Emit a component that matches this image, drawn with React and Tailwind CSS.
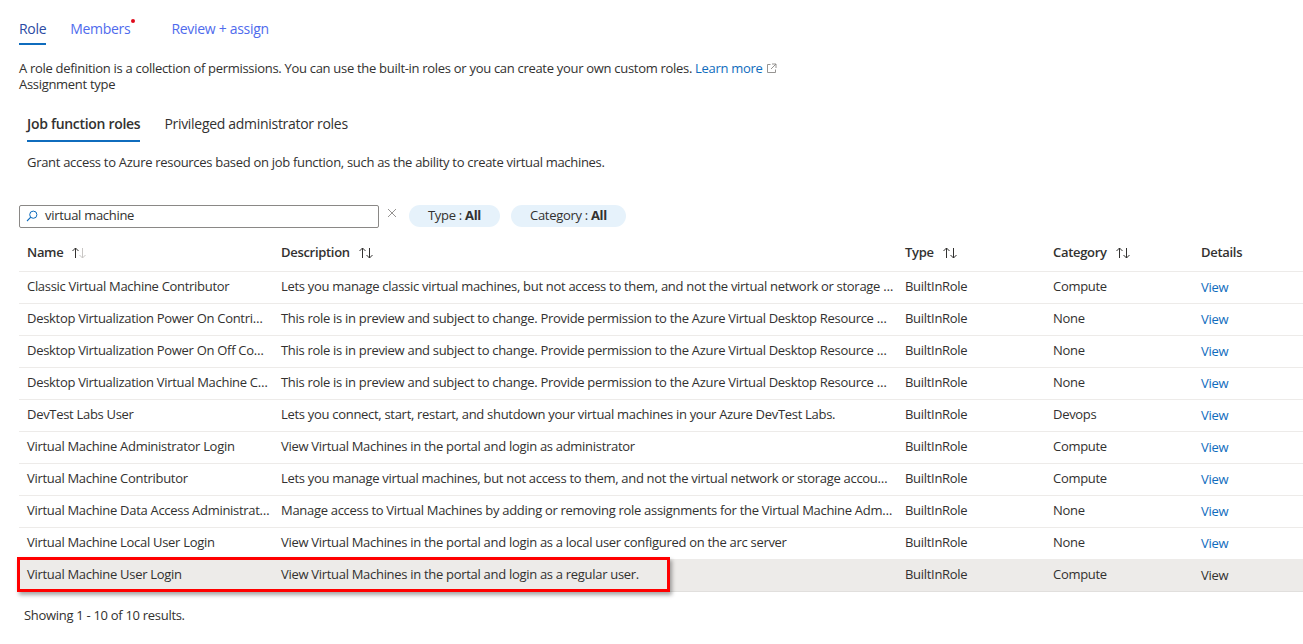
import React from "react";

const rows = [
  ["Classic Virtual Machine Contributor", "Lets you manage classic virtual machines, but not access to them, and not the virtual network or storage account they're connected to.", "Compute"],
  ["Desktop Virtualization Power On Contributor", "This role is in preview and subject to change. Provide permission to the Azure Virtual Desktop Resource Provider to start virtual machines.", "None"],
  ["Desktop Virtualization Power On Off Contributor", "This role is in preview and subject to change. Provide permission to the Azure Virtual Desktop Resource Provider to start and stop virtual machines.", "None"],
  ["Desktop Virtualization Virtual Machine Contributor", "This role is in preview and subject to change. Provide permission to the Azure Virtual Desktop Resource Provider to create, delete, update virtual machines.", "None"],
  ["DevTest Labs User", "Lets you connect, start, restart, and shutdown your virtual machines in your Azure DevTest Labs.", "Devops"],
  ["Virtual Machine Administrator Login", "View Virtual Machines in the portal and login as administrator", "Compute"],
  ["Virtual Machine Contributor", "Lets you manage virtual machines, but not access to them, and not the virtual network or storage account they're connected to.", "Compute"],
  ["Virtual Machine Data Access Administrator", "Manage access to Virtual Machines by adding or removing role assignments for the Virtual Machine Administrator Login and Virtual Machine User Login roles.", "None"],
  ["Virtual Machine Local User Login", "View Virtual Machines in the portal and login as a local user configured on the arc server", "None"],
  ["Virtual Machine User Login", "View Virtual Machines in the portal and login as a regular user.", "Compute"],
];

// little up/down sort arrows
function SortIcon({ dimDown }) {
  return (
    <svg width="16" height="14" viewBox="0 0 16 14" className="ml-2 inline-block">
      <path d="M4.5 2v10M1.5 5l3-3 3 3" fill="none" stroke="#323130" strokeWidth="1" />
      <path d="M11.5 2v10M8.5 9l3 3 3-3" fill="none" stroke={dimDown ? "#c8c6c4" : "#323130"} strokeWidth="1" />
    </svg>
  );
}

export default function App() {
  return (
    <div
      className="w-[1303px] h-[644px] bg-white text-[13px] tracking-[-0.3px] text-[#323130] overflow-hidden"
      style={{ fontFamily: '"Open Sans", "Noto Sans", sans-serif' }}
    >
      {/* Top tabs */}
      <div className="flex items-end gap-6 pl-[19px] pt-[18px] text-[14px]">
        <div className="relative pb-[6px]">
          <span className="text-[#2b4aa3]">Role</span>
          <div className="absolute left-0 right-0 bottom-0 h-[2px] bg-[#0f6cbd]" />
        </div>
        <div className="relative pb-[6px] text-[#4f6bed]">
          Members
          <span className="absolute -right-[5px] top-[1px] w-[4px] h-[4px] rounded-full bg-[#e00b1c]" />
        </div>
        <div className="pb-[6px] text-[#4f6bed] ml-[17px]">Review + assign</div>
      </div>

      {/* Intro */}
      <div className="pl-[19px] mt-[15px] leading-[16px]">
        <div>
          A role definition is a collection of permissions. You can use the built-in roles or you can create your own custom roles.{" "}
          <span className="text-[#0f6cbd]">Learn more</span>
          <svg width="11" height="11" viewBox="0 0 11 11" className="inline-block ml-[3px] -mt-[3px]">
            <path d="M4.5 1.5h-3v8h8v-3" fill="none" stroke="#8a8886" strokeWidth="0.9" />
            <path d="M6 1h4v4M10 1L5 6" fill="none" stroke="#8a8886" strokeWidth="0.9" />
          </svg>
        </div>
        <div>Assignment type</div>
      </div>

      {/* Sub tabs */}
      <div className="flex gap-6 pl-[27px] mt-[21px] text-[14px]">
        <div className="relative pb-[8px] font-semibold">
          Job function roles
          <div className="absolute left-0 right-0 bottom-0 h-[2px] bg-[#0f6cbd]" />
        </div>
        <div className="pb-[8px]">Privileged administrator roles</div>
      </div>

      <div className="pl-[27px] mt-[11px]">
        Grant access to Azure resources based on job function, such as the ability to create virtual machines.
      </div>

      {/* Search + filters */}
      <div className="flex items-center pl-[19px] mt-[32px]">
        <div className="w-[360px] h-[23px] border border-[#8a8886] rounded-[2px] flex items-center pl-[6px]">
          <svg width="12" height="12" viewBox="0 0 12 12">
            <circle cx="7.3" cy="4.7" r="3.6" fill="none" stroke="#0f6cbd" strokeWidth="1" />
            <path d="M4.8 7.2L1 11" stroke="#0f6cbd" strokeWidth="1.1" />
          </svg>
          <span className="ml-[7px] text-[#323130]">virtual machine</span>
        </div>
        <svg width="10" height="10" viewBox="0 0 10 10" className="ml-[8px] -mt-[6px]">
          <path d="M1 1l8 8M9 1l-8 8" stroke="#8a8886" strokeWidth="0.9" />
        </svg>
        <div className="ml-[12px] h-[22px] px-[19px] rounded-full bg-[#e6f2fb] flex items-center">
          Type :&nbsp;<span className="font-bold">All</span>
        </div>
        <div className="ml-[11px] h-[22px] px-[19px] rounded-full bg-[#e6f2fb] flex items-center">
          Category :&nbsp;<span className="font-bold">All</span>
        </div>
      </div>

      {/* Table */}
      <div className="relative ml-[19px] mt-[7px]">
        <div className="grid grid-cols-[254px_624px_148px_148px_110px] h-[37px] items-center border-b border-[#edebe9] font-semibold">
          <div className="pl-[8px] flex items-center">Name <SortIcon dimDown /></div>
          <div className="pl-[8px] flex items-center">Description <SortIcon /></div>
          <div className="pl-[8px] flex items-center">Type <SortIcon /></div>
          <div className="pl-[8px] flex items-center">Category <SortIcon /></div>
          <div className="pl-[8px]">Details</div>
        </div>
        {rows.map((r, i) => {
          const last = i === rows.length - 1;
          return (
            <div
              key={r[0]}
              className={
                "grid grid-cols-[254px_624px_148px_148px_110px] h-[32px] items-center border-b " +
                (last ? "bg-[#edebe9] border-[#e1dfdd]" : "border-[#edebe9]")
              }
            >
              <div className="pl-[8px] pr-[3px] truncate">{r[0]}</div>
              <div className="pl-[8px] pr-[3px] truncate">{r[1]}</div>
              <div className="pl-[8px] truncate">BuiltInRole</div>
              <div className="pl-[8px] truncate">{r[2]}</div>
              <div className={"pl-[8px] pt-[2px] " + (last ? "text-[#323130]" : "text-[#0f6cbd]")}>View</div>
            </div>
          );
        })}
        {/* highlight box */}
        <div className="absolute left-[-2px] top-[322px] w-[653px] h-[35px] border-[3px] border-[#ff0000] shadow-[2px_3px_4px_rgba(0,0,0,0.35)] pointer-events-none" />
      </div>

      <div className="pl-[24px] mt-[14px]">Showing 1 - 10 of 10 results.</div>
    </div>
  );
}
